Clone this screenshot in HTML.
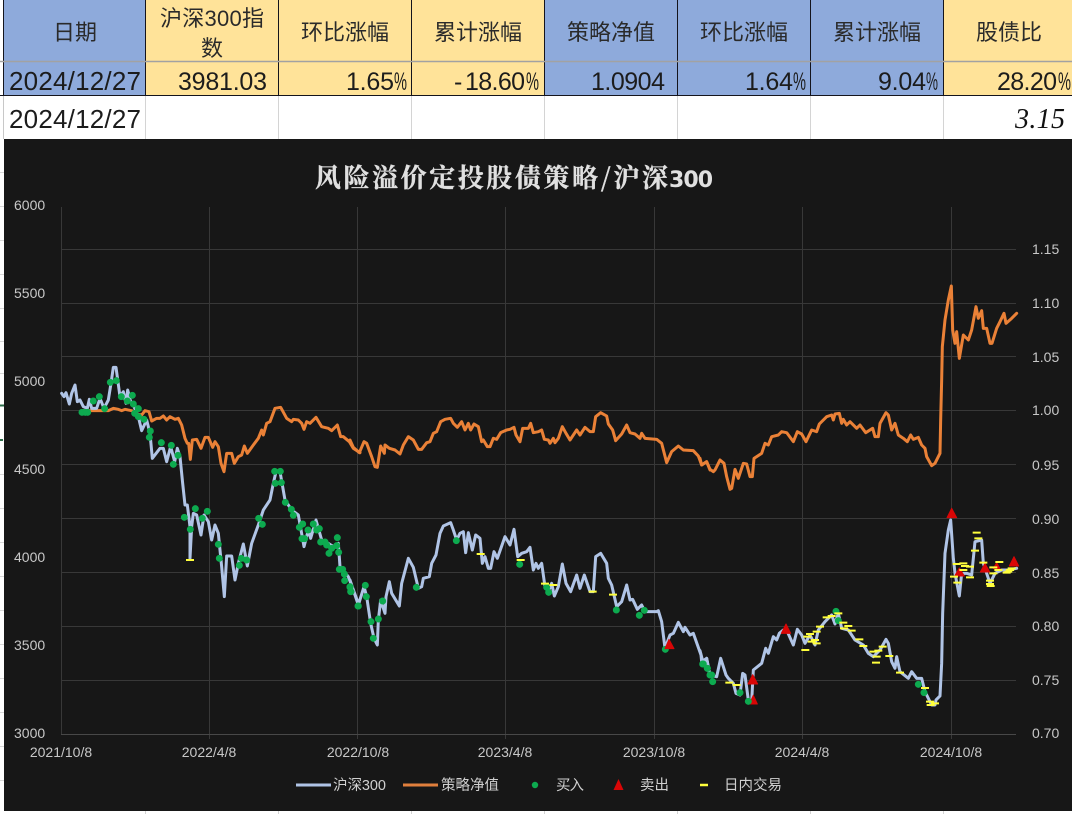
<!DOCTYPE html>
<html lang="zh">
<head>
<meta charset="utf-8">
<title>风险溢价定投股债策略</title>
<style>
html,body{margin:0;padding:0;background:#fff;width:1072px;height:814px;overflow:hidden}
svg{display:block}
text{font-family:"Liberation Sans","Noto Sans CJK SC",sans-serif}
.h{font-size:22px;fill:#2a2a2a;text-anchor:middle;font-weight:400}
.n{font-size:25px;fill:#1c1c1c}
.d{font-size:26px;fill:#1c1c1c}
.t{font-size:14px;fill:#c8c8c8}
.x{font-size:14px;fill:#c8c8c8;text-anchor:middle}
.l{font-size:14.5px;fill:#d0d0d0}
.s{fill:none;stroke-width:9;stroke-linejoin:round;stroke-linecap:round}
.b{stroke:#b0c4e6}
.o{stroke:#ea8137}
.g{fill:none;stroke:#0daa4f;stroke-width:21;stroke-linecap:round}
.y{fill:none;stroke:#ffff3c;stroke-width:6}
.r{fill:#d90606;stroke:#d90606;stroke-width:3;stroke-linejoin:round}
</style>
</head>
<body>
<svg width="1072" height="814" viewBox="0 0 1072 814" xmlns="http://www.w3.org/2000/svg">
<rect width="1072" height="814" fill="#fff"/>

<!-- left sliver gridlines -->
<path d="M0 172.500H4M0 206.500H4M0 240.500H4M0 274.500H4M0 308.500H4M0 341.500H4M0 373.500H4M0 474.500H4M0 508.500H4M0 542.500H4M0 576.500H4M0 610.500H4M0 644.500H4M0 678.500H4M0 712.500H4M0 746.500H4M0 780.500H4" stroke="#d8d8d8" stroke-width="1"/>
<path d="M0 405.500H4M0 440H3" stroke="#2c6e49" stroke-width="2"/>

<!-- table fills -->
<rect x="4" y="0" width="141" height="61" fill="#8eaadb"/>
<rect x="145" y="0" width="399" height="61" fill="#ffe399"/>
<rect x="544" y="0" width="399" height="61" fill="#8eaadb"/>
<rect x="943" y="0" width="129" height="61" fill="#ffe399"/>
<rect x="4" y="62" width="141" height="33" fill="#8eaadb"/>
<rect x="145" y="62" width="399" height="33" fill="#ffe399"/>
<rect x="544" y="62" width="399" height="33" fill="#8eaadb"/>
<rect x="943" y="62" width="129" height="33" fill="#ffe399"/>

<!-- table lines -->
<path d="M145.500 96V139M278.500 96V139M411.500 96V139M544.500 96V139M677.500 96V139M810.500 96V139M943.500 96V139" stroke="#d4d4d4" stroke-width="1"/>
<path d="M3.500 0V139" stroke="#c8c8c8" stroke-width="1"/>
<path d="M3.500 0V96M145.500 0V96M278.500 0V96M411.500 0V96M544.500 0V96M677.500 0V96M810.500 0V96M943.500 0V96" stroke="#14141c" stroke-width="1"/>
<path d="M0 61.500H1072" stroke="#a2a2a2" stroke-width="1.500"/>
<path d="M0 95.500H1072" stroke="#14141c" stroke-width="1"/>

<!-- headers -->
<text class="h" x="75" y="40">日期</text>
<text class="h" x="160" y="26" style="text-anchor:start" textLength="104">沪深300指</text>
<text class="h" x="212" y="56">数</text>
<text class="h" x="345" y="40">环比涨幅</text>
<text class="h" x="478" y="40">累计涨幅</text>
<text class="h" x="611" y="40">策略净值</text>
<text class="h" x="744" y="40">环比涨幅</text>
<text class="h" x="877" y="40">累计涨幅</text>
<text class="h" x="1009" y="40">股债比</text>

<!-- data row -->
<text class="d" x="9" y="90" textLength="132">2024/12/27</text>
<text class="n" x="178" y="90" textLength="89">3981.03</text>
<text class="n" x="346" y="90" textLength="48">1.65</text><text class="n" x="394" y="90" textLength="13" lengthAdjust="spacingAndGlyphs">%</text>
<text class="n" x="454" y="90">-</text><text class="n" x="465" y="90" textLength="60">18.60</text><text class="n" x="526" y="90" textLength="13" lengthAdjust="spacingAndGlyphs">%</text>
<text class="n" x="591" y="90" textLength="74">1.0904</text>
<text class="n" x="745" y="90" textLength="48">1.64</text><text class="n" x="793" y="90" textLength="13" lengthAdjust="spacingAndGlyphs">%</text>
<text class="n" x="878" y="90" textLength="48">9.04</text><text class="n" x="926" y="90" textLength="12" lengthAdjust="spacingAndGlyphs">%</text>
<text class="n" x="997" y="90" textLength="60">28.20</text><text class="n" x="1058" y="90" textLength="13" lengthAdjust="spacingAndGlyphs">%</text>

<text class="d" x="9" y="128" textLength="132">2024/12/27</text>
<text x="1015" y="128" textLength="50" style="font-family:'Liberation Serif',serif;font-style:italic;font-size:28px;fill:#111">3.15</text>

<!-- chart -->
<rect x="4" y="139" width="1068" height="672" fill="#171717"/>
<path d="M145.500 811V814M278.500 811V814M411.500 811V814M544.500 811V814M677.500 811V814M810.500 811V814M943.500 811V814" stroke="#d4d4d4" stroke-width="1"/>

<text x="315" y="187" textLength="353" style="font-family:'Noto Serif CJK SC','Liberation Serif',serif;font-weight:700;font-size:26px;fill:#e0e0e0;stroke:#e0e0e0;stroke-width:.3">风险溢价定投股债策略/沪深</text>
<text x="669" y="187" textLength="44" style="font-family:'DejaVu Sans',sans-serif;font-weight:700;font-size:22px;fill:#e0e0e0">300</text>

<!-- grid -->
<path d="M61 249.500H1016M61 303.500H1016M61 356.500H1016M61 410.500H1016M61 464.500H1016M61 518.500H1016M61 572.500H1016M61 626.500H1016M61 680.500H1016" stroke="#383838" stroke-width="1"/>
<path d="M61.500 207V734M209.500 207V739M357.500 207V739M505.500 207V739M654.500 207V739M802.500 207V739M951.500 207V739" stroke="#383838" stroke-width="1"/>
<path d="M61 734.500H1016" stroke="#484848" stroke-width="1"/>

<!-- y left -->
<text class="t" x="14" y="210">6000</text>
<text class="t" x="14" y="298">5500</text>
<text class="t" x="14" y="386">5000</text>
<text class="t" x="14" y="474">4500</text>
<text class="t" x="14" y="562">4000</text>
<text class="t" x="14" y="650">3500</text>
<text class="t" x="14" y="738">3000</text>
<!-- y right -->
<text class="t" x="1032" y="254">1.15</text>
<text class="t" x="1032" y="308">1.10</text>
<text class="t" x="1032" y="362">1.05</text>
<text class="t" x="1032" y="415">1.00</text>
<text class="t" x="1032" y="470">0.95</text>
<text class="t" x="1032" y="524">0.90</text>
<text class="t" x="1032" y="578">0.85</text>
<text class="t" x="1032" y="631">0.80</text>
<text class="t" x="1032" y="685">0.75</text>
<text class="t" x="1032" y="738">0.70</text>
<!-- x -->
<text class="x" x="61" y="757">2021/10/8</text>
<text class="x" x="209" y="757">2022/4/8</text>
<text class="x" x="358" y="757">2022/10/8</text>
<text class="x" x="505" y="757">2023/4/8</text>
<text class="x" x="654" y="757">2023/10/8</text>
<text class="x" x="802" y="757">2024/4/8</text>
<text class="x" x="951" y="757">2024/10/8</text>

<!-- segment 1 -->
<g transform="translate(0,340) scale(0.33333)">
<polyline class="s o" points="245,212 300,212 325,212 340,205 355,208 365,212 375,208 395,212 410,222 425,225 435,212 447,215 455,243 470,235 480,235 490,228 500,240 510,230 525,238 535,235 545,255 555,295 562,310 566,310 571,358 577,300 590,298 603,325 615,292 625,292 638,322 645,305 655,320 663,370 672,395 680,340 695,340 703,370 715,350 725,345 733,318 742,340 760,315 775,295 785,270 790,285 800,250 810,245 825,205 842,202 860,235 875,245 880,238 895,240 905,250 912,268 920,245 930,250 948,232 965,260 985,265 995,272 1012,255 1022,290 1030,290 1048,305 1060,325 1080,338"/>
<polyline class="s b" points="185,160 192,170 198,158 208,192 215,160 225,135 232,185 240,180 250,200 262,205 268,178 275,205 290,205 300,175 312,205 325,180 333,130 340,82 348,82 360,170 370,155 378,190 383,150 392,185 402,200 415,230 425,272 440,240 450,280 457,355 480,325 490,325 500,365 512,320 524,365 532,325 540,350 548,430 555,495 562,495 570,560 570,655 575,560 580,520 590,525 603,585 612,525 625,545 635,600 645,555 655,580 665,680 673,770 680,648 695,648 705,720 715,670 730,612 742,678 755,610 775,555 790,510 810,480 820,430 828,395 840,395 855,480 875,510 895,525 912,620 925,570 932,595 948,540 965,600 985,610 1000,620 1015,610 1020,680 1045,710 1075,790"/>
</g>
<!-- segment 2 -->
<g transform="translate(350,390) scale(0.33333)">
<polyline class="s o" points="0,150 10,172 28,188 42,155 50,160 65,200 75,230 82,232 92,168 103,190 105,165 118,175 135,180 150,192 160,165 175,140 190,150 205,178 215,178 230,158 240,155 250,130 260,125 272,95 285,88 302,85 310,100 322,112 335,95 345,120 355,100 362,120 372,102 385,110 395,155 400,150 412,170 420,170 430,145 440,148 452,128 470,120 480,118 492,112 498,135 510,155 518,115 535,115 542,100 550,128 565,125 575,120 583,148 595,150 600,160 610,145 615,158 625,145 637,110 648,130 660,150 680,120 690,135 705,112 720,125 730,125 737,80 752,68 770,78 775,102 788,120 797,152 815,132 830,105 840,128 855,132 870,145 875,130 885,145 920,148 935,160 950,218 965,185 985,168 1000,180 1030,182 1045,198 1055,225 1070,215 1080,240"/>
<polyline class="s b" points="0,570 25,645 42,590 50,620 62,700 72,745 82,765 85,690 92,630 105,670 108,620 118,575 125,610 148,648 155,580 175,505 190,532 205,595 215,590 220,565 238,560 245,520 258,495 270,430 280,408 302,398 310,420 320,450 330,430 340,425 347,488 355,428 367,480 377,435 390,445 397,520 405,500 415,535 422,535 432,485 442,505 465,440 480,465 492,418 503,500 515,490 530,485 540,472 550,540 558,520 565,535 575,520 585,590 595,605 605,580 613,618 625,590 637,522 648,580 662,605 680,555 690,595 703,555 720,605 730,605 737,500 752,490 770,520 775,565 785,585 800,650 815,635 830,585 840,630 848,628 862,658 875,645 885,665 920,665 925,662 935,695 945,775 960,735 970,730 985,697 1000,725 1005,712 1020,735 1030,730 1053,795 1055,815 1070,805 1080,860"/>
</g>
<!-- segment 3 -->
<g transform="translate(700,280) scale(0.33333)">
<polyline class="s o" points="0,535 5,555 20,545 30,568 40,575 45,570 60,540 72,550 80,590 90,628 95,625 105,568 115,595 130,550 140,552 150,590 157,590 162,535 185,520 195,490 205,495 215,470 235,465 245,455 260,458 280,485 292,455 305,462 318,485 335,450 350,455 358,432 380,410 395,405 400,420 405,402 418,400 425,430 430,418 440,435 450,425 470,445 480,435 497,458 518,445 525,470 535,470 540,430 558,398 565,405 575,450 585,430 595,465 610,475 622,485 632,465 640,478 655,472 665,495 675,505 680,530 695,557 705,550 720,520 722,420 725,300 727,200 735,120 745,60 754,18 758,150 765,190 770,155 778,235 790,165 805,180 815,150 828,80 835,115 845,92 850,145 860,145 870,190 876,190 890,145 900,125 912,100 918,130 935,115 950,100"/>
<polyline class="s b" points="0,1112 10,1150 20,1135 30,1185 50,1190 62,1135 78,1185 85,1195 100,1210 108,1240 120,1245 128,1180 135,1185 145,1260 155,1265 160,1170 185,1150 197,1105 205,1120 220,1070 230,1080 238,1060 250,1050 262,1055 280,1095 292,1048 305,1065 315,1090 330,1065 345,1095 355,1050 375,1025 395,1005 405,1032 415,1000 425,1045 445,1050 465,1080 490,1095 505,1120 520,1130 540,1110 558,1078 565,1090 575,1145 585,1165 590,1130 600,1175 625,1195 635,1175 650,1195 665,1195 675,1235 695,1275 705,1275 708,1260 720,1248 725,1150 728,1000 735,820 745,750 752,720 760,835 765,880 778,948 785,880 800,880 815,885 825,785 845,780 850,850 870,910 885,880 905,870 925,870 950,865"/>
</g>

<!-- buy markers -->
<g transform="translate(0,340) scale(0.33333)">
<path class="g" d="M246 217h0M256 217h0M263 217h0M280 183h0M298 170h0M314 206h0M331 127h0M349 122h0M364 170h0M382 183h0M397 166h0M400 192h0M415 206h0M404 220h0M415 230h0M432 238h0M451 273h0M448 292h0M484 308h0M514 316h0M534 346h0M520 373h0M553 532h0M571 568h0M586 506h0M607 535h0M622 514h0M655 613h0M658 655h0M718 676h0M724 655h0M740 660h0M776 535h0M787 553h0M824 394h0M841 394h0M826 430h0M844 428h0M856 487h0M874 508h0M880 526h0M898 562h0M908 552h0M906 596h0M914 596h0M924 570h0M940 552h0M950 570h0M958 566h0M962 606h0M975 606h0M980 615h0M987 640h0M995 625h0M1010 617h0M1012 593h0M1016 637h0M1018 688h0M1028 688h0M1033 702h0M1034 722h0M1050 742h0M1052 755h0M1074 798h0"/>
<path class="y" d="M558 660h24"/>
</g>
<g transform="translate(350,390) scale(0.33333)">
<path class="g" d="M0 590h0M3 605h0M25 648h0M46 586h0M49 620h0M63 695h0M85 687h0M70 745h0M98 633h0M199 592h0M319 452h0M509 523h0M590 592h0M596 607h0M799 660h0M868 676h0M883 661h0M946 778h0M1058 822h0M1072 835h0M1080 855h0"/>
<polygon class="r" points="957,748 972,776 945,776"/>
<path class="y" d="M380 492h24M500 510h24M573 581h24M598 585h24M716 605h24M777 614h24"/>
</g>
<g transform="translate(700,280) scale(0.33333)">
<path class="g" d="M10 1152h0M22 1165h0M35 1185h0M38 1205h0M120 1238h0M408 994h0M415 1022h0M655 1213h0M672 1238h0"/>
<polygon class="r" points="755,685 770,713 741,713"/>
<polygon class="r" points="158,1184 173,1212 144,1212"/>
<polygon class="r" points="160,1246 172,1272 148,1272"/>
<polygon class="r" points="258,1032 272,1060 244,1060"/>
<polygon class="r" points="942,830 956,858 928,858"/>
<polygon class="r" points="855,850 869,876 841,876"/>
<polygon class="r" points="778,864 793,888 764,888"/>
<polygon class="r" points="890,848 900,866 880,866"/>
<path class="g" d="M145 1264h0"/>
<path class="y" d="M76 1208h24M98 1215h24M304 1110h24M310 1070h24M318 1062h24M338 1055h24M333 1080h24M323 1085h24M338 1090h24M348 1040h24M368 1012h24M383 1008h24M403 1000h24M418 1028h24M433 1038h24M420 1045h24M443 1052h24M466 1078h24M478 1098h24M508 1115h24M518 1130h24M516 1148h24M536 1100h24M523 1112h24M556 1128h24M588 1178h24M663 1224h24M678 1265h24M693 1270h24M680 1275h24M758 852h24M778 850h24M783 858h24M778 870h24M750 890h24M760 908h24M798 860h24M798 892h24M818 758h24M823 775h24M813 812h24M838 848h24M868 880h24M883 870h24M886 846h24M858 902h24M858 912h24M860 918h24M913 875h24M923 865h24M918 870h24M908 878h24M868 862h24"/>
</g>

<!-- legend -->
<path d="M296 785H331" stroke="#b0c4e6" stroke-width="3"/>
<text class="l" x="333" y="790" textLength="53">沪深300</text>
<path d="M403 785H438" stroke="#e07f3c" stroke-width="3"/>
<text class="l" x="441" y="790" textLength="58">策略净值</text>
<circle cx="535" cy="785" r="3.200" fill="#0daa4f"/>
<text class="l" x="556" y="790" textLength="28">买入</text>
<polygon points="618.500,779 623.500,790 613.500,790" fill="#d90606"/>
<text class="l" x="640" y="790" textLength="29">卖出</text>
<path d="M700 785H708" stroke="#ffff3c" stroke-width="2.500"/>
<text class="l" x="724" y="790" textLength="58">日内交易</text>
</svg>
</body>
</html>
